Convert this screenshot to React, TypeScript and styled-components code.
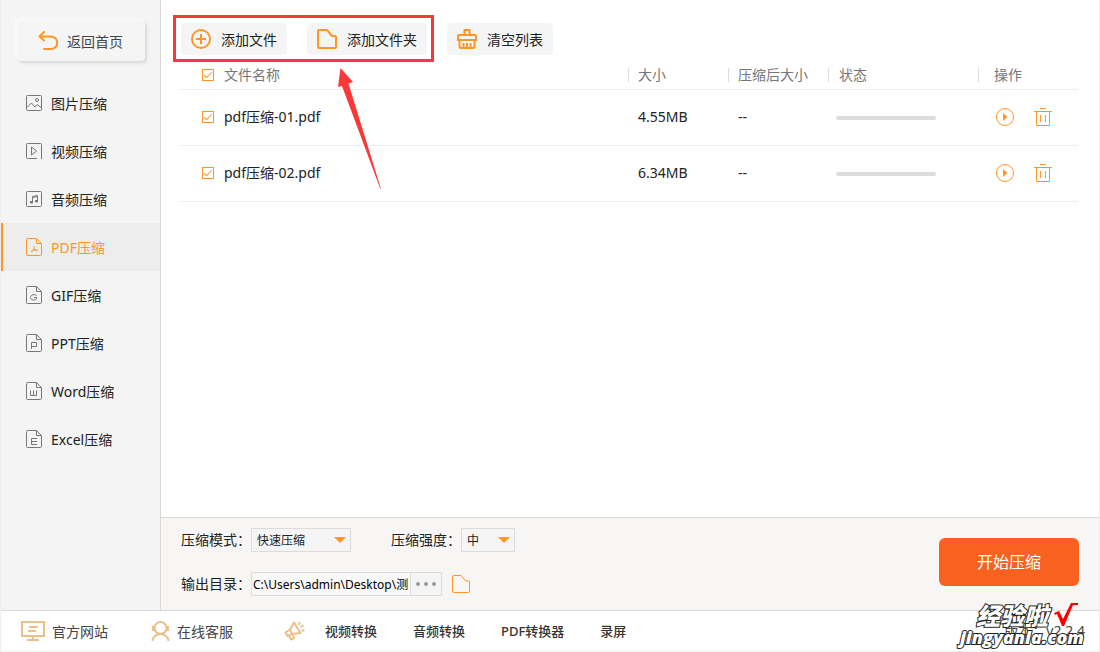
import React from "react";
import styled, { createGlobalStyle, css } from "styled-components";

const orange = "#ff9626";
const line = "#ececec";

const GlobalStyle = createGlobalStyle`
  *, *::before, *::after { box-sizing: border-box; }
  body {
    margin: 0;
    background: #fff;
    color: #222;
    font: 14px/20px "Noto Sans", "Noto Sans CJK SC", sans-serif;
  }
  button, input, select { font: inherit; color: inherit; }
  button { cursor: pointer; }
`;

const Window = styled.div`
  display: flex;
  flex-direction: column;
  min-height: 100vh;
  border: 1px solid #efefef;
  border-top: 0;
`;

const Body = styled.div`
  flex: 1;
  display: flex;
`;

const Sidebar = styled.aside`
  flex: none;
  width: 160px;
  padding-top: 21px;
  background: #f4f4f4;
  border-right: 1px solid #d9d9d9;
`;

const Label = styled.span`
  padding-top: 2px;
`;

const BackButton = styled.button`
  display: flex;
  align-items: center;
  gap: 8px;
  width: 128px;
  height: 40px;
  margin: 0 0 18px 16px;
  padding: 0 0 0 20px;
  border: 0;
  border-radius: 4px;
  background: #f5f5f5;
  color: #444;
  box-shadow: 2px 2px 3px #d8d8d8, -2px -2px 3px #fbfbfb;
`;

const NavItem = styled.a<{ $active?: boolean }>`
  display: flex;
  align-items: center;
  gap: 9px;
  height: 48px;
  padding-left: 23px;
  border-left: 2px solid transparent;
  color: #222;
  text-decoration: none;
  svg { color: #777; }
  ${(p) =>
    p.$active &&
    css`
      background: #ededed;
      border-color: ${orange};
      color: ${orange};
      svg { color: ${orange}; }
    `}
`;

const Main = styled.main`
  flex: 1;
  min-width: 0;
  display: flex;
  flex-direction: column;
`;

const Content = styled.div`
  flex: 1;
  padding: 23px 21px 0 20px;
`;

const Toolbar = styled.div`
  display: flex;
  gap: 20px;
`;

const Highlighted = styled.div`
  position: relative;
  display: flex;
  gap: 20px;
`;

const HighlightFrame = styled.div`
  position: absolute;
  inset: -8px -7px -7px -8px;
  border: 3px solid #fb3838;
  pointer-events: none;
`;

const Arrow = styled.svg`
  position: absolute;
  left: 156px;
  top: 45px;
  pointer-events: none;
`;

const ToolButton = styled.button`
  display: flex;
  align-items: center;
  gap: 10px;
  height: 32px;
  padding: 0 10px;
  border: 0;
  border-radius: 4px;
  background: #f5f5f5;
  white-space: nowrap;
`;

const IconTone = styled.span`
  display: flex;
  color: ${orange};
`;

const FileTable = styled.table`
  width: 100%;
  table-layout: fixed;
  border-collapse: collapse;
`;

const HeadCell = styled.th<{ $width?: number }>`
  width: ${(p) => (p.$width ? `${p.$width}px` : "auto")};
  height: 34px;
  padding: 6px 0 0;
  border-bottom: 1px solid ${line};
  color: #777;
  font-weight: 400;
  text-align: left;
`;

const HeadLabel = styled.div<{ $indent?: number }>`
  padding-left: ${(p) => p.$indent ?? 9}px;
  border-left: 1px solid #ddd;
  line-height: 14px;
`;

const Cell = styled.td`
  height: 56px;
  padding: 0 0 0 10px;
  border-bottom: 1px solid ${line};
`;

const NameCell = styled(Cell)`
  padding-left: 0;
`;

const CheckLabel = styled.label`
  display: flex;
  align-items: center;
  gap: 10px;
  padding-left: 21px;
`;

const CheckBox = styled.input`
  appearance: none;
  display: grid;
  place-items: center;
  width: 12px;
  height: 12px;
  margin: 0;
  border: 1px solid ${orange};
  &:checked::before {
    content: "";
    width: 8px;
    height: 4px;
    border: solid ${orange};
    border-width: 0 0 1px 1px;
    transform: translateY(-1px) rotate(-45deg);
  }
`;

const Progress = styled.div`
  width: 100px;
  height: 4px;
  margin: 2px 0 0 -2px;
  border-radius: 2px;
  background: #ddd;
`;

const Actions = styled.div`
  display: flex;
  gap: 20px;
  padding-left: 8px;
`;

const IconButton = styled.button`
  display: flex;
  padding: 0;
  border: 0;
  background: none;
  color: ${orange};
`;

const Settings = styled.section`
  display: flex;
  align-items: center;
  justify-content: space-between;
  padding: 10px 20px 14px;
  border-top: 1px solid #d9d9d9;
  background: #f7f6f5;
`;

const Fields = styled.div`
  display: flex;
  flex-direction: column;
  gap: 20px;
`;

const FieldRow = styled.div`
  display: flex;
  align-items: center;
`;

const FieldLabel = styled.label`
  width: 70px;
  white-space: nowrap;
`;

const SelectBox = styled.div<{ $width: number }>`
  display: grid;
  align-items: center;
  width: ${(p) => p.$width}px;
  height: 24px;
  margin-right: 40px;
  > * { grid-area: 1 / 1; }
  svg { justify-self: end; margin-right: 5px; pointer-events: none; }
`;

const Select = styled.select`
  appearance: none;
  width: 100%;
  height: 24px;
  padding: 2px 5px 0;
  border: 1px solid #dcdcdc;
  border-radius: 0;
  background: #f5f5f5;
  font-size: 12px;
`;

const PathBox = styled.div`
  display: flex;
  width: 191px;
  height: 24px;
  margin-right: 10px;
  border: 1px solid #dcdcdc;
`;

const PathInput = styled.input`
  flex: 1;
  min-width: 0;
  padding: 2px 0 0 1px;
  border: 0;
  background: #f9f9f9;
  color: #000;
  font-size: 12px;
`;

const MoreButton = styled.button`
  display: grid;
  place-items: center;
  width: 31px;
  padding: 0;
  border: 0;
  border-left: 1px solid #dcdcdc;
  background: #f5f5f5;
`;

const StartButton = styled.button`
  width: 140px;
  height: 48px;
  border: 0;
  border-radius: 6px;
  background: #f9611e;
  color: #fff;
  font-size: 16px;
`;

const Footer = styled.footer`
  position: relative;
  display: flex;
  align-items: center;
  height: 41px;
  padding: 0 14px 0 20px;
  border-top: 1px solid #d9d9d9;
  color: #444;
`;

const FooterLink = styled.a<{ $space: number }>`
  display: flex;
  align-items: center;
  gap: 7px;
  margin-right: ${(p) => p.$space}px;
  color: inherit;
  text-decoration: none;
`;

const ToolLink = styled.a`
  margin-right: 36px;
  color: #333;
  font-size: 13px;
  font-weight: 500;
  text-decoration: none;
`;

const Megaphone = styled.svg`
  margin-right: 20px;
`;

const Version = styled.span`
  margin-left: auto;
`;

const Watermark = styled.div`
  position: absolute;
  right: 15px;
  bottom: 4px;
  color: #fff;
  font-style: italic;
  font-weight: 700;
  -webkit-text-stroke: 2px #222;
  paint-order: stroke fill;
`;

const WatermarkTop = styled.div`
  display: flex;
  align-items: center;
  justify-content: flex-end;
  gap: 6px;
  padding-right: 6px;
  font-family: "Noto Sans CJK SC", sans-serif;
  font-size: 24px;
  font-weight: 900;
  line-height: 22px;
`;

const WatermarkSite = styled.div`
  font-family: "Open Sans", sans-serif;
  font-size: 18px;
  font-weight: 800;
  line-height: 20px;
`;

const Icon = ({ size = 18, width = 1, children }: { size?: number; width?: number; children: React.ReactNode }) => (
  <svg width={size} height={size} viewBox={`0 0 ${size} ${size}`} fill="none" stroke="currentColor" strokeWidth={width} aria-hidden="true">
    {children}
  </svg>
);

const docPaths: Record<string, string> = {
  pdf: "M8 8c.5 2 0 4-3 6M8 10.500c1 1 2 1.500 4 2M5.500 13c2-1 4-1.200 6-.8",
  gif: "M10.500 9.500c-1.500-1.500-6-1-6 2s4.500 3 6 1.500v-1.500H8",
  ppt: "M5.500 15V8.500h5v4h-5",
  word: "M4.500 8.500v5h3v-5M7.500 13.500h3v-5",
  excel: "M11 8.500H5.500v6H11M5.500 11.500H11",
};

const DocIcon = ({ kind }: { kind: string }) => (
  <svg width="16" height="18" viewBox="0 0 16 18" fill="none" stroke="currentColor" aria-hidden="true">
    <path d="M10.500.5h-9a1 1 0 0 0-1 1v15a1 1 0 0 0 1 1h13a1 1 0 0 0 1-1V5.500zM10.500.5v5h5" />
    <path d={docPaths[kind]} />
  </svg>
);

const ImageIcon = () => (
  <Icon size={16}>
    <rect x=".5" y=".5" width="15" height="15" rx="1" />
    <circle cx="11" cy="5" r="1.500" />
    <path d="M1 12.500l4.500-4.500 3.500 4 2-2.500 4 3" />
  </Icon>
);

const VideoIcon = () => (
  <Icon size={16}>
    <path d="M11 15.500H1.500a1 1 0 0 1-1-1v-13a1 1 0 0 1 1-1h13a1 1 0 0 1 1 1V16M5.500 4v8l5-4z" />
  </Icon>
);

const AudioIcon = () => (
  <Icon size={16}>
    <rect x=".5" y=".5" width="15" height="15" rx="1" />
    <path d="M6.500 11V5.500l5-1V10M6.500 6.500l5-1" />
    <path d="M4.500 10.500h2v1.500h-2zM9.500 9.500h2V11h-2z" fill="currentColor" />
  </Icon>
);

const AddIcon = () => (
  <Icon size={20} width={2}>
    <circle cx="10" cy="10" r="9" />
    <path d="M10 5v10M5 10h10" />
  </Icon>
);

const BrushIcon = () => (
  <Icon size={20} width={2}>
    <path d="M7.500 6V1h5v5M1 11V7q0-1 1-1h16q1 0 1 1v4zM2.500 11v7q0 1 1 1h13q1 0 1-1v-7M6.500 14v5M10 14v5M13.500 14v5" />
  </Icon>
);

const FolderIcon = ({ size, width }: { size: number; width: number }) => {
  const o = width / 2;
  const e = size - o;
  return (
    <Icon size={size} width={width}>
      <path
        d={`M${o} ${o + 1}q0-1 1-1H${size * 0.5}l${size * 0.25} ${size * 0.3}H${e - 1}q1 0 1 1V${e - 1}q0 1-1 1H${o + 1}q-1 0-1-1z`}
        strokeLinejoin="round"
      />
    </Icon>
  );
};

const DownArrow = () => (
  <svg width="12" height="6" viewBox="0 0 12 6" aria-hidden="true">
    <path d="M0 0h12L6 6z" fill={orange} />
  </svg>
);

const navItems = [
  { label: "图片压缩", icon: <ImageIcon /> },
  { label: "视频压缩", icon: <VideoIcon /> },
  { label: "音频压缩", icon: <AudioIcon /> },
  { label: "PDF压缩", icon: <DocIcon kind="pdf" />, active: true },
  { label: "GIF压缩", icon: <DocIcon kind="gif" /> },
  { label: "PPT压缩", icon: <DocIcon kind="ppt" /> },
  { label: "Word压缩", icon: <DocIcon kind="word" /> },
  { label: "Excel压缩", icon: <DocIcon kind="excel" /> },
];

const files = [
  { name: "pdf压缩-01.pdf", size: "4.55MB" },
  { name: "pdf压缩-02.pdf", size: "6.34MB" },
];

export default function App() {
  return (
    <>
      <GlobalStyle />
      <Window>
        <Body>
          <Sidebar>
            <BackButton>
              <svg width="22" height="20" viewBox="0 0 22 20" fill="none" stroke={orange} strokeWidth="2" strokeLinecap="round" strokeLinejoin="round" aria-hidden="true">
                <path d="M7 1L2.500 5.500l4.500 4M2.500 5.500H14a6 6 0 0 1 0 12.500H7" />
              </svg>
              <Label>返回首页</Label>
            </BackButton>
            <nav>
              {navItems.map((item) => (
                <NavItem key={item.label} href="#" $active={item.active}>
                  {item.icon}
                  <Label>{item.label}</Label>
                </NavItem>
              ))}
            </nav>
          </Sidebar>
          <Main>
            <Content>
              <Toolbar>
                <Highlighted>
                  <ToolButton>
                    <IconTone><AddIcon /></IconTone>
                    <Label>添加文件</Label>
                  </ToolButton>
                  <ToolButton>
                    <IconTone><FolderIcon size={20} width={2} /></IconTone>
                    <Label>添加文件夹</Label>
                  </ToolButton>
                  <HighlightFrame />
                  <Arrow width="48" height="124" viewBox="0 0 48 124" aria-hidden="true">
                    <path d="M3.500 0L16 14 11.500 15.500 44 121 43 120 5 18 1 19z" fill="#fb3838" />
                  </Arrow>
                </Highlighted>
                <ToolButton>
                  <IconTone><BrushIcon /></IconTone>
                  <Label>清空列表</Label>
                </ToolButton>
              </Toolbar>
              <FileTable>
                <thead>
                  <tr>
                    <HeadCell>
                      <CheckLabel><CheckBox type="checkbox" defaultChecked />文件名称</CheckLabel>
                    </HeadCell>
                    <HeadCell $width={100}><HeadLabel>大小</HeadLabel></HeadCell>
                    <HeadCell $width={100}><HeadLabel>压缩后大小</HeadLabel></HeadCell>
                    <HeadCell $width={150}><HeadLabel $indent={10}>状态</HeadLabel></HeadCell>
                    <HeadCell $width={100}><HeadLabel $indent={15}>操作</HeadLabel></HeadCell>
                  </tr>
                </thead>
                <tbody>
                  {files.map((file) => (
                    <tr key={file.name}>
                      <NameCell>
                        <CheckLabel><CheckBox type="checkbox" defaultChecked />{file.name}</CheckLabel>
                      </NameCell>
                      <Cell>{file.size}</Cell>
                      <Cell>--</Cell>
                      <Cell><Progress /></Cell>
                      <Cell>
                        <Actions>
                          <IconButton aria-label="开始">
                            <Icon>
                              <circle cx="9" cy="9" r="8.500" />
                              <path d="M7 5v8l4.500-4z" fill="currentColor" stroke="none" />
                            </Icon>
                          </IconButton>
                          <IconButton aria-label="删除">
                            <Icon>
                              <path d="M6 .5h6M0 3.500h18M2.500 3.500v14h13v-14M6.500 7v7M11.500 7v7" />
                            </Icon>
                          </IconButton>
                        </Actions>
                      </Cell>
                    </tr>
                  ))}
                </tbody>
              </FileTable>
            </Content>
            <Settings>
              <Fields>
                <FieldRow>
                  <FieldLabel htmlFor="mode">压缩模式：</FieldLabel>
                  <SelectBox $width={100}>
                    <Select id="mode"><option>快速压缩</option></Select>
                    <DownArrow />
                  </SelectBox>
                  <FieldLabel htmlFor="level">压缩强度：</FieldLabel>
                  <SelectBox $width={54}>
                    <Select id="level"><option>中</option></Select>
                    <DownArrow />
                  </SelectBox>
                </FieldRow>
                <FieldRow>
                  <FieldLabel htmlFor="path">输出目录：</FieldLabel>
                  <PathBox>
                    <PathInput id="path" defaultValue="C:\Users\admin\Desktop\测" />
                    <MoreButton aria-label="更多">
                      <svg width="22" height="4" viewBox="0 0 22 4" fill="#999" aria-hidden="true">
                        <circle cx="3" cy="2" r="2" />
                        <circle cx="11" cy="2" r="2" />
                        <circle cx="19" cy="2" r="2" />
                      </svg>
                    </MoreButton>
                  </PathBox>
                  <IconButton aria-label="打开目录"><FolderIcon size={18} width={1} /></IconButton>
                </FieldRow>
              </Fields>
              <StartButton>开始压缩</StartButton>
            </Settings>
          </Main>
        </Body>
        <Footer>
          <FooterLink href="#" $space={43}>
            <svg width="24" height="20" viewBox="0 0 24 20" fill="none" stroke="#ebc08a" strokeWidth="2" aria-hidden="true">
              <path d="M1 1h22v14H1zM12 15v4M6 19h12M8 6h9M7 10h8" />
            </svg>
            <Label>官方网站</Label>
          </FooterLink>
          <FooterLink href="#" $space={51}>
            <svg width="19" height="20" viewBox="0 0 19 20" fill="none" stroke="#ebc08a" strokeWidth="2" aria-hidden="true">
              <circle cx="9.500" cy="7" r="6" />
              <path d="M2 5v5M17 5v5M1.500 20c0-4 4-7 8-7s8 3 8 7" />
            </svg>
            <Label>在线客服</Label>
          </FooterLink>
          <Megaphone width="21" height="20" viewBox="0 0 21 20" fill="none" stroke="#ebc08a" strokeWidth="2" strokeLinejoin="round" aria-hidden="true">
            <path d="M10 1.500L16.500 12 8 13 3.500 15 1.500 11.500 6 8.500zM6 8.500L8 13M5 15l2 3.500 3-1.500-1.500-4M14.500 4L16 1M16.500 6.500L19.500 4M17.500 9.500h3" />
          </Megaphone>
          <ToolLink href="#">视频转换</ToolLink>
          <ToolLink href="#">音频转换</ToolLink>
          <ToolLink href="#">PDF转换器</ToolLink>
          <ToolLink href="#">录屏</ToolLink>
          <Version>版本：v2.2.4</Version>
          <Watermark>
            <WatermarkTop>
              经验啦
              <svg width="24" height="24" viewBox="0 0 24 24" aria-hidden="true">
                <path d="M0 10l5-2 4 8L17 0h7v2h-5L10 23H8L3 11l-2 1z" fill="#f00" />
              </svg>
            </WatermarkTop>
            <WatermarkSite>jingyanla.com</WatermarkSite>
          </Watermark>
        </Footer>
      </Window>
    </>
  );
}
